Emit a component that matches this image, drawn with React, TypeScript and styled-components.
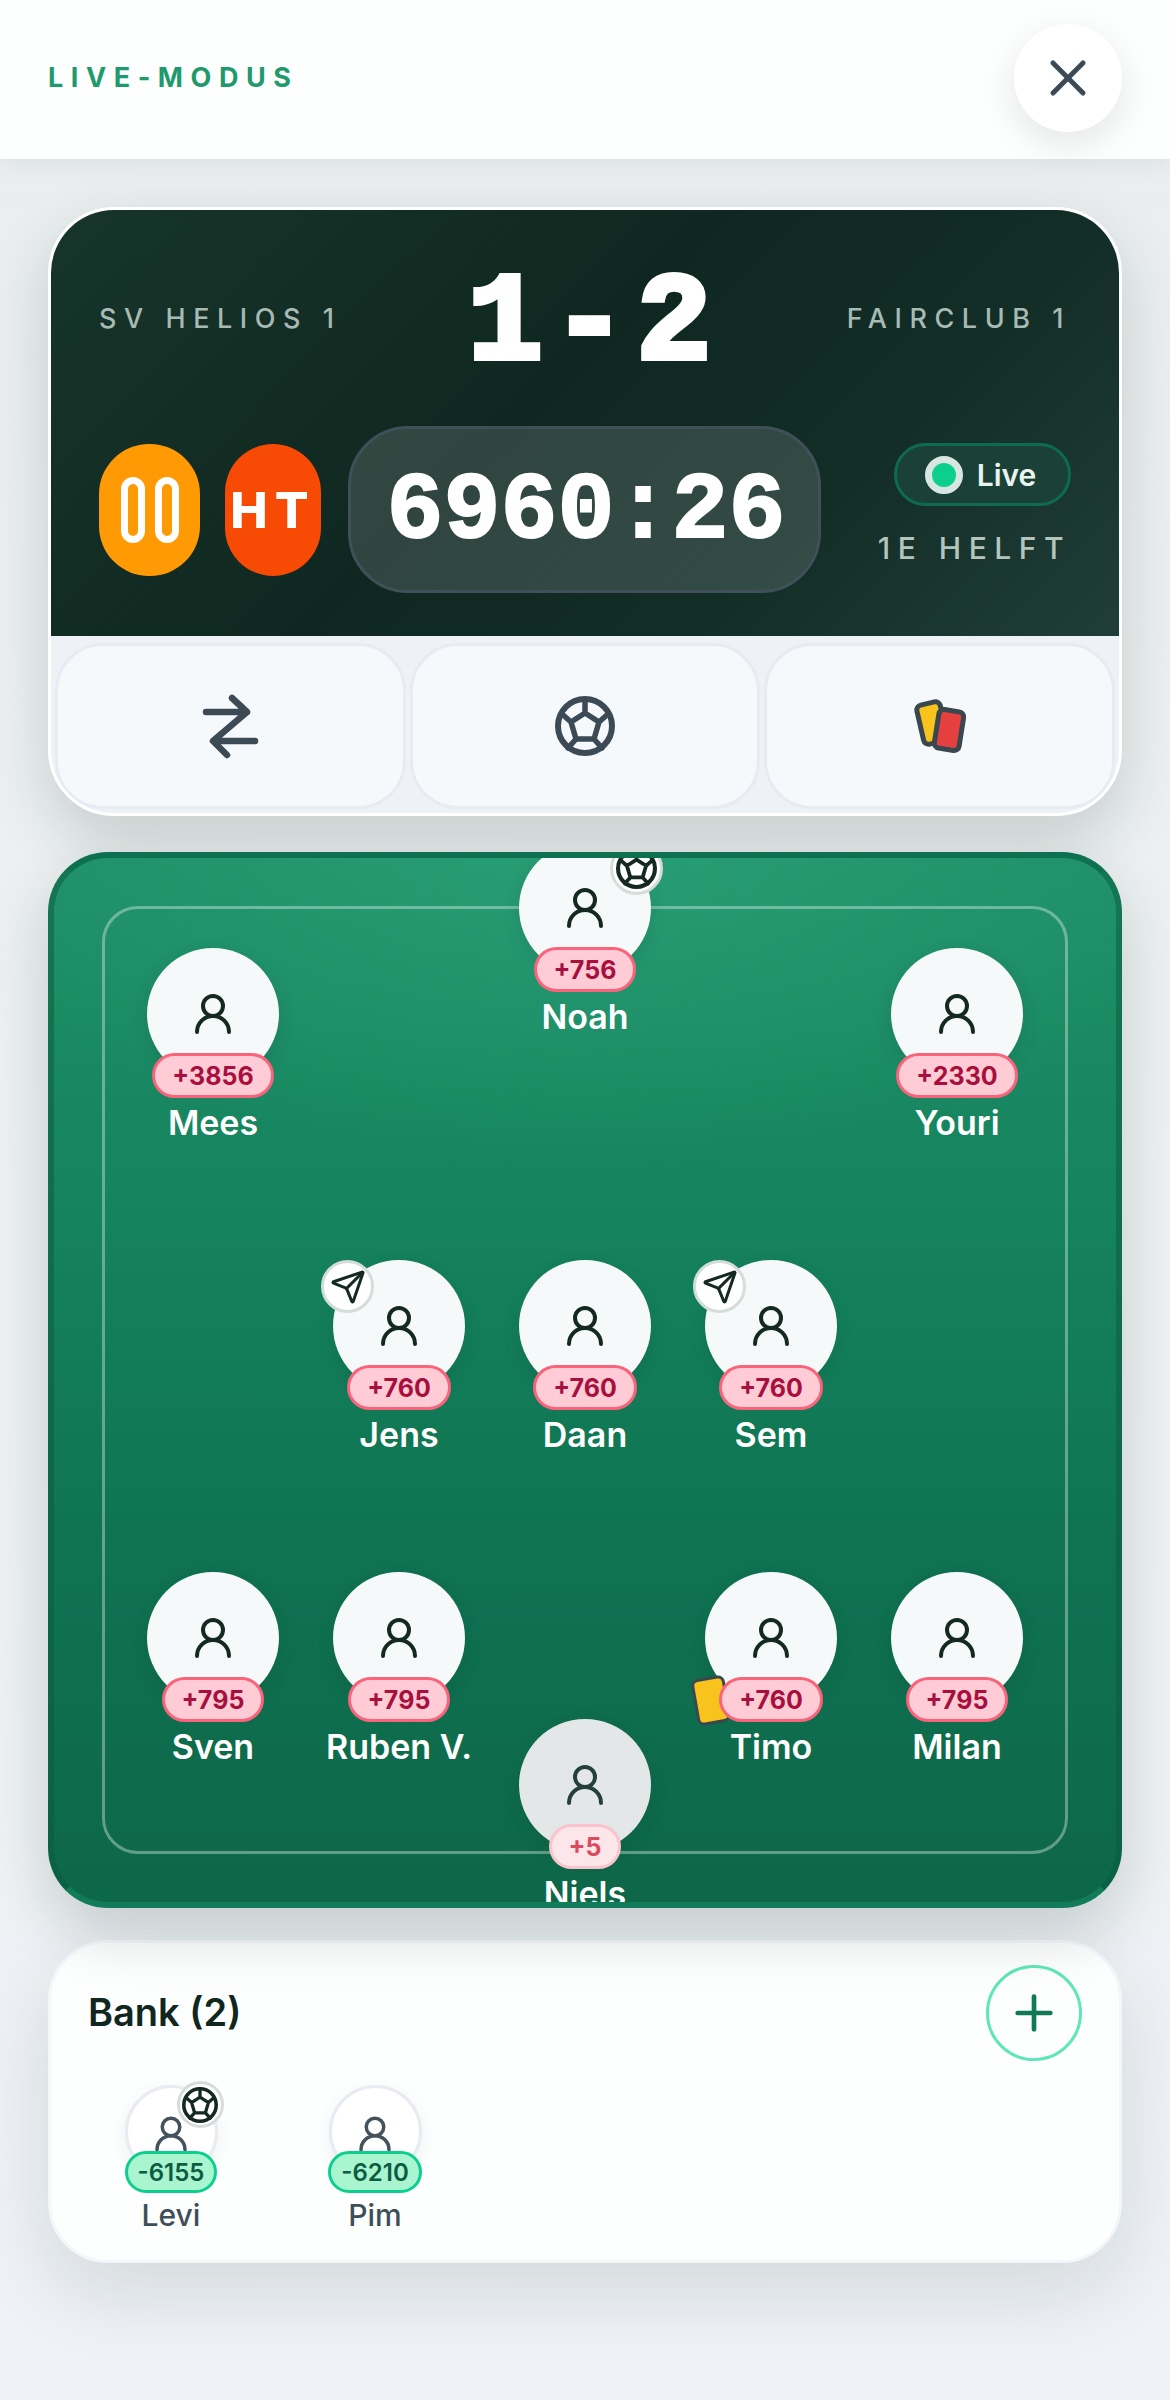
import React from "react";
import styled, { createGlobalStyle } from "styled-components";
import { X, Plus, UserRound, Send } from "lucide-react";

const Global = createGlobalStyle`
  html, body { margin: 0; padding: 0; }
  body { background: #eef2f6; font-family: Inter, "Noto Sans", sans-serif; }
`;

const Page = styled.div`
  width: 1170px;
  height: 2400px;
  overflow: hidden;
  background: linear-gradient(180deg, #e9edee 0%, #edf1f2 50%, #eff2f7 100%);
  display: flex;
  flex-direction: column;
`;
const Header = styled.header`
  height: 159px;
  flex: none;
  background: #fdfefe;
  display: flex;
  align-items: center;
  justify-content: space-between;
  padding: 0 48px;
  box-shadow: 0 4px 24px rgba(15, 39, 32, 0.06);
  position: relative;
`;
const ModeLabel = styled.div`
  font-size: 27px;
  font-weight: 700;
  letter-spacing: 0.28em;
  color: #1f9a6d;
  margin-top: -5px;
`;
const CloseButton = styled.button`
  width: 108px;
  height: 108px;
  border-radius: 50%;
  border: 0;
  background: #fff;
  color: #3b4a54;
  display: flex;
  align-items: center;
  justify-content: center;
  box-shadow: 0 12px 36px rgba(15, 39, 32, 0.1);
  margin-top: -3px;
`;
const Main = styled.main`
  padding: 48px 48px 0;
  display: flex;
  flex-direction: column;
`;
const ScoreCard = styled.section`
  height: 609px;
  box-sizing: border-box;
  border: 3px solid #fff;
  border-radius: 66px;
  overflow: hidden;
  background: #eef1f6;
  box-shadow: 0 24px 60px rgba(15, 39, 32, 0.17);
  display: flex;
  flex-direction: column;
`;
const Dark = styled.div`
  height: 426px;
  flex: none;
  box-sizing: border-box;
  padding: 36px 48px 43px;
  background: linear-gradient(135deg, #17352b 0%, #0f2720 45%, #122e27 72%, #213d37 100%);
  display: flex;
  flex-direction: column;
  gap: 36px;
`;
const TopRow = styled.div`
  height: 144px;
  display: grid;
  grid-template-columns: 1fr auto 1fr;
  align-items: center;
`;
const TeamName = styled.div<{ $right?: boolean }>`
  font-size: 27px;
  font-weight: 500;
  letter-spacing: 0.28em;
  color: #a7bab3;
  white-space: nowrap;
  text-align: ${(p) => (p.$right ? "right" : "left")};
`;
const Score = styled.div`
  font-family: "Liberation Mono", monospace;
  font-weight: 700;
  font-size: 124px;
  line-height: 130px;
  letter-spacing: 10px;
  margin-left: 19px;
  padding-top: 14px;
  -webkit-text-stroke: 6px #fff;
  color: #fff;
`;
const ControlRow = styled.div`
  height: 167px;
  display: flex;
  align-items: center;
`;
const PauseButton = styled.button`
  width: 101px;
  height: 132px;
  border: 0;
  border-radius: 50px;
  background: #ff9a05;
  display: flex;
  align-items: center;
  justify-content: center;
  padding: 0;
  margin-right: 25px;
`;
const HalfButton = styled.button`
  width: 96px;
  height: 132px;
  border: 0;
  border-radius: 48px;
  background: #f64a05;
  color: #fff;
  font-family: Inter, sans-serif;
  font-weight: 800;
  font-size: 50px;
  letter-spacing: 0.14em;
  padding: 0;
  margin-right: 27px;
  white-space: nowrap;
  display: flex;
  align-items: center;
  justify-content: center;
`;
const Timer = styled.div`
  width: 473px;
  height: 167px;
  box-sizing: border-box;
  padding: 4px 0 0 3px;
  border: 3px solid #3f5058;
  border-radius: 60px;
  background: rgba(255, 255, 255, 0.14);
  color: #fff;
  font-family: "Liberation Mono", monospace;
  font-weight: 700;
  font-size: 95px;
  -webkit-text-stroke: 2px #fff;
  display: flex;
  align-items: center;
  justify-content: center;
`;
const StatusColumn = styled.div`
  margin-left: auto;
  margin-top: -10px;
  display: flex;
  flex-direction: column;
  align-items: flex-end;
  gap: 24px;
`;
const LivePill = styled.div`
  height: 63px;
  width: 177px;
  box-sizing: border-box;
  padding-right: 4px;
  border: 3px solid #0f6b4f;
  border-radius: 32px;
  background: #1a4038;
  display: flex;
  align-items: center;
  justify-content: center;
  gap: 14px;
  color: #e8f5ee;
  font-weight: 600;
  font-size: 30px;
`;
const LiveDot = styled.span`
  width: 24px;
  height: 24px;
  border-radius: 50%;
  background: #0ccf8f;
  border: 7px solid #d8e6e1;
`;
const Phase = styled.div`
  font-size: 30px;
  font-weight: 500;
  letter-spacing: 0.25em;
  color: #b3c5bd;
  white-space: nowrap;
`;
const Actions = styled.div`
  flex: 1;
  padding: 7px 4px 4px;
  display: grid;
  grid-template-columns: 1fr 1fr 1fr;
  gap: 4px;
`;
const ActionButton = styled.button`
  border: 3px solid #e8ebf2;
  border-radius: 48px;
  background: #f6f9fc;
  color: #3b4a54;
  display: flex;
  align-items: center;
  justify-content: center;
  padding: 0;
`;
const Pitch = styled.section`
  position: relative;
  margin-top: 36px;
  height: 1056px;
  box-sizing: border-box;
  border: 6px solid rgba(8, 90, 60, 0.5);
  border-top-color: #0d7050;
  border-bottom-color: #127b58;
  border-radius: 60px;
  overflow: hidden;
  background-origin: border-box;
  background-image: radial-gradient(ellipse 60% 30% at 50% 0%, rgba(50, 170, 128, 0.5) 0%, rgba(50, 170, 128, 0) 100%),
    linear-gradient(180deg, #1f9069 0%, #15835d 35%, #0f7352 65%, #0d6749 100%);
  box-shadow: 0 24px 60px rgba(15, 39, 32, 0.18);
`;
const PitchLines = styled.div`
  position: absolute;
  left: 48px;
  right: 48px;
  top: 48px;
  height: 948px;
  box-sizing: border-box;
  border: 3px solid rgba(255, 255, 255, 0.35);
  border-radius: 36px;
`;
const Player = styled.div<{ $x: number; $y: number }>`
  position: absolute;
  left: ${(p) => p.$x - 54 - 100}px;
  top: ${(p) => p.$y - 858}px;
  width: 200px;
  display: flex;
  flex-direction: column;
  align-items: center;
`;
const Avatar = styled.div<{ $dim?: boolean }>`
  position: relative;
  width: 132px;
  height: 132px;
  border-radius: 50%;
  background: ${(p) => (p.$dim ? "#e3e7e7" : "#f6f9f9")};
  color: ${(p) => (p.$dim ? "#25403a" : "#14291f")};
  display: flex;
  align-items: center;
  justify-content: center;
  box-shadow: 0 6px 18px rgba(15, 39, 32, 0.12);
`;
const Delta = styled.div<{ $dim?: boolean }>`
  margin-top: -27px;
  position: relative;
  height: 45px;
  box-sizing: border-box;
  padding: 0 17px;
  border: 3.5px solid ${(p) => (p.$dim ? "#fbc3cd" : "#f9637b")};
  border-radius: 23px;
  background: ${(p) => (p.$dim ? "#fde6ea" : "#ffccd5")};
  color: ${(p) => (p.$dim ? "#dc4a5f" : "#a80f3e")};
  font-size: 25px;
  font-weight: 700;
  display: flex;
  align-items: center;
`;
const Name = styled.div`
  margin-top: 5px;
  color: #fff;
  font-size: 34px;
  font-weight: 600;
  line-height: 40px;
  white-space: nowrap;
`;
const IconBadge = styled.div<{ $side: "left" | "right" }>`
  position: absolute;
  top: 0;
  ${(p) => p.$side}: -12px;
  width: 53px;
  height: 53px;
  box-sizing: border-box;
  border: 3.5px solid #d6dcdc;
  border-radius: 50%;
  background: #fff;
  color: #14291f;
  display: flex;
  align-items: center;
  justify-content: center;
`;
const YellowCard = styled.div`
  position: absolute;
  left: -11px;
  top: 105px;
  width: 34px;
  height: 47px;
  box-sizing: border-box;
  border: 3px solid #39484f;
  border-radius: 7px;
  background: #f8c31c;
  transform: rotate(-10deg);
`;
const BankCard = styled.section`
  margin-top: 32px;
  height: 323px;
  box-sizing: border-box;
  padding: 22px 37px 0 37px;
  border-radius: 60px;
  background: #fdfefe;
  border: 3px solid #f4f6fa;
  box-shadow: 0 30px 80px rgba(15, 39, 32, 0.12);
`;
const BankHeader = styled.div`
  display: flex;
  align-items: center;
  justify-content: space-between;
`;
const BankTitle = styled.h2`
  margin: -2px 0 0;
  font-size: 38px;
  font-weight: 600;
  color: #10261f;
`;
const AddButton = styled.button`
  width: 96px;
  height: 96px;
  border-radius: 50%;
  border: 3px solid #5ee7b7;
  background: transparent;
  color: #0f7a55;
  display: flex;
  align-items: center;
  justify-content: center;
  padding: 0;
`;
const Bench = styled.div`
  display: flex;
  gap: 74px;
  margin-top: 24px;
  margin-left: 18px;
`;
const BenchPlayer = styled.div`
  width: 130px;
  display: flex;
  flex-direction: column;
  align-items: center;
`;
const BenchAvatar = styled.div`
  position: relative;
  width: 93px;
  height: 93px;
  box-sizing: border-box;
  padding-top: 4px;
  border: 3px solid #e8ebf2;
  border-radius: 50%;
  background: #fff;
  color: #43525c;
  display: flex;
  align-items: center;
  justify-content: center;
  box-shadow: 0 6px 18px rgba(15, 39, 32, 0.06);
`;
const BenchBadge = styled.div`
  position: absolute;
  top: -7px;
  right: -9px;
  width: 47px;
  height: 47px;
  box-sizing: border-box;
  border: 3.5px solid #d6dcdc;
  border-radius: 50%;
  background: #fff;
  color: #14291f;
  display: flex;
  align-items: center;
  justify-content: center;
`;
const BenchDelta = styled.div`
  margin-top: -27px;
  position: relative;
  height: 42px;
  box-sizing: border-box;
  padding: 0 10px;
  border: 3.5px solid #0ccf8f;
  border-radius: 21px;
  background: #a8f5d0;
  color: #0c5c42;
  font-size: 24px;
  font-weight: 600;
  display: flex;
  align-items: center;
`;
const BenchName = styled.div`
  margin-top: 3px;
  font-size: 30px;
  font-weight: 500;
  line-height: 38px;
  color: #3d4e58;
`;

const PauseIcon = () => (
  <svg width="58" height="66" viewBox="0 0 58 66" fill="none" stroke="#fff" strokeWidth="7">
    <rect x="3.5" y="3.5" width="17" height="59" rx="8.5" />
    <rect x="37.5" y="3.5" width="17" height="59" rx="8.5" />
  </svg>
);
const SwapIcon = () => (
  <svg width="62" height="67" viewBox="30 22 62 67" fill="none" stroke="currentColor" strokeWidth="6.5" strokeLinecap="round" strokeLinejoin="round">
    <path d="M37 41H78L63 27M78 41 44 70H86M44 70 58 84" />
  </svg>
);
const BallIcon = ({ size }: { size: number }) => (
  <svg width={size} height={size} viewBox="0 0 60 60" fill="none" stroke="currentColor" strokeWidth="5.5" strokeLinecap="round" strokeLinejoin="round">
    <circle cx="30" cy="30" r="27" strokeWidth="6" />
    <path d="M30 17 44 26 39 43H21L16 26ZM30 17V5M44 26 53 18M39 43 47 52M21 43 13 52M16 26 7 18" />
  </svg>
);
const CardsIcon = () => (
  <svg width="62" height="62" viewBox="30 25 62 62">
    <rect x="41" y="33" width="24" height="40" rx="5" fill="#f8c31c" stroke="#39484f" strokeWidth="5" transform="rotate(-13 53 53)" />
    <rect x="57.5" y="40.5" width="25" height="39" rx="5" fill="#e5403f" stroke="#39484f" strokeWidth="5" transform="rotate(9 70 60)" />
  </svg>
);

type P = { name: string; delta: string; x: number; y: number; badge?: "ball" | "send"; card?: boolean; dim?: boolean };
const players: P[] = [
  { name: "Noah", delta: "+756", x: 585, y: 842, badge: "ball" },
  { name: "Mees", delta: "+3856", x: 213, y: 948 },
  { name: "Youri", delta: "+2330", x: 957, y: 948 },
  { name: "Jens", delta: "+760", x: 399, y: 1260, badge: "send" },
  { name: "Daan", delta: "+760", x: 585, y: 1260 },
  { name: "Sem", delta: "+760", x: 771, y: 1260, badge: "send" },
  { name: "Sven", delta: "+795", x: 213, y: 1572 },
  { name: "Ruben V.", delta: "+795", x: 399, y: 1572 },
  { name: "Timo", delta: "+760", x: 771, y: 1572, card: true },
  { name: "Milan", delta: "+795", x: 957, y: 1572 },
  { name: "Niels", delta: "+5", x: 585, y: 1719, dim: true },
];

export default function App() {
  return (
    <Page>
      <Global />
      <Header>
        <ModeLabel>LIVE-MODUS</ModeLabel>
        <CloseButton>
          <X size={60} strokeWidth={2} />
        </CloseButton>
      </Header>
      <Main>
        <ScoreCard>
          <Dark>
            <TopRow>
              <TeamName>SV HELIOS 1</TeamName>
              <Score>1-2</Score>
              <TeamName $right>FAIRCLUB 1</TeamName>
            </TopRow>
            <ControlRow>
              <PauseButton>
                <PauseIcon />
              </PauseButton>
              <HalfButton>HT</HalfButton>
              <Timer>6960:26</Timer>
              <StatusColumn>
                <LivePill>
                  <LiveDot />
                  Live
                </LivePill>
                <Phase>1E HELFT</Phase>
              </StatusColumn>
            </ControlRow>
          </Dark>
          <Actions>
            <ActionButton>
              <SwapIcon />
            </ActionButton>
            <ActionButton>
              <BallIcon size={60} />
            </ActionButton>
            <ActionButton>
              <CardsIcon />
            </ActionButton>
          </Actions>
        </ScoreCard>
        <Pitch>
          <PitchLines />
          {players.map((p) => (
            <Player key={p.name} $x={p.x} $y={p.y}>
              <Avatar $dim={p.dim}>
                <UserRound size={48} strokeWidth={2} />
                {p.badge === "ball" && (
                  <IconBadge $side="right">
                    <BallIcon size={41} />
                  </IconBadge>
                )}
                {p.badge === "send" && (
                  <IconBadge $side="left">
                    <Send size={36} strokeWidth={2} />
                  </IconBadge>
                )}
                {p.card && <YellowCard />}
              </Avatar>
              <Delta $dim={p.dim}>{p.delta}</Delta>
              <Name>{p.name}</Name>
            </Player>
          ))}
        </Pitch>
        <BankCard>
          <BankHeader>
            <BankTitle>Bank (2)</BankTitle>
            <AddButton>
              <Plus size={56} strokeWidth={2} />
            </AddButton>
          </BankHeader>
          <Bench>
            <BenchPlayer>
              <BenchAvatar>
                <UserRound size={42} strokeWidth={2} />
                <BenchBadge>
                  <BallIcon size={36} />
                </BenchBadge>
              </BenchAvatar>
              <BenchDelta>-6155</BenchDelta>
              <BenchName>Levi</BenchName>
            </BenchPlayer>
            <BenchPlayer>
              <BenchAvatar>
                <UserRound size={42} strokeWidth={2} />
              </BenchAvatar>
              <BenchDelta>-6210</BenchDelta>
              <BenchName>Pim</BenchName>
            </BenchPlayer>
          </Bench>
        </BankCard>
      </Main>
    </Page>
  );
}
